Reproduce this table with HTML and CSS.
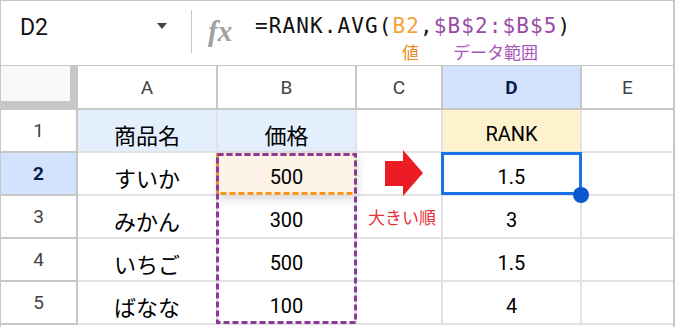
FILE: index.html
```
<!DOCTYPE html>
<html lang="ja">
<head>
<meta charset="utf-8">
<link rel="stylesheet" href="styles.css">
</head>
<body>
<div class="app">
  <div class="fbar">
    <div class="namebox"><span class="cellref">D2</span><span class="tri"></span></div>
    <div class="sep"></div>
    <div class="fxbox"><span class="fx">fx</span></div>
    <div class="formula">
      <div class="fline">=RANK.AVG(<span class="r1">B2</span>,<span class="r2">$B$2:$B$5</span>)</div>
      <div class="lline"><span class="l1">値</span><span class="l2">データ範囲</span></div>
    </div>
  </div>
  <div class="sheet">
    <div class="corner"><div class="corner-in"></div></div>
    <div class="c ch">A</div>
    <div class="c ch">B</div>
    <div class="c ch">C</div>
    <div class="c ch csel">D</div>
    <div class="c ch last">E</div>

    <div class="c rh">1</div>
    <div class="c jp blue">商品名</div>
    <div class="c jp blue">価格</div>
    <div class="c"></div>
    <div class="c yellow">RANK</div>
    <div class="c last"></div>

    <div class="c rh rsel">2</div>
    <div class="c jp">すいか</div>
    <div class="c b2">500</div>
    <div class="c"></div>
    <div class="c">1.5</div>
    <div class="c last"></div>

    <div class="c rh">3</div>
    <div class="c jp">みかん</div>
    <div class="c">300</div>
    <div class="c note">大きい順</div>
    <div class="c">3</div>
    <div class="c last"></div>

    <div class="c rh">4</div>
    <div class="c jp">いちご</div>
    <div class="c">500</div>
    <div class="c"></div>
    <div class="c">1.5</div>
    <div class="c last"></div>

    <div class="c rh">5</div>
    <div class="c jp">ばなな</div>
    <div class="c">100</div>
    <div class="c"></div>
    <div class="c">4</div>
    <div class="c last"></div>
  </div>

  <svg class="overlay" width="675" height="327" viewBox="0 0 675 327">
    <rect x="217.5" y="154.5" width="138" height="39" fill="none" stroke="#f7941d" stroke-width="3" stroke-dasharray="6 3"/>
    <rect x="217.5" y="154.5" width="138" height="168" fill="none" stroke="#8b3a99" stroke-width="3" stroke-dasharray="6 3"/>
    <polygon points="385,161 403,161 403,150 423,173 403,196 403,186 385,186" fill="#ed1c24"/>
  </svg>
  <div class="sel"></div>
  <div class="handle"></div>
</div>
</body>
</html>
```

FILE: styles.css
```
* { box-sizing: border-box; margin: 0; padding: 0; }
body { margin: 0; background: #fff; font-family: Roboto, "Noto Sans CJK JP", sans-serif; }

.app {
  position: relative;
  width: 675px;
  height: 327px;
  border: 1px solid #c7c7c7;
  border-right-width: 2px;
  border-bottom: none;
  overflow: hidden;
  background: #fff;
}

.fbar {
  height: 65px;
  border-bottom: 1px solid #c7c7c7;
  display: flex;
  align-items: flex-start;
}

.namebox {
  width: 190px;
  display: flex;
  justify-content: space-between;
  align-items: flex-start;
  padding: 14px 24px 0 19px;
}
.cellref { font-size: 23px; line-height: 26px; color: #111; }
.tri {
  margin-top: 8px;
  width: 0; height: 0;
  border-left: 5px solid transparent;
  border-right: 5px solid transparent;
  border-top: 6px solid #444;
}
.sep { width: 1px; height: 43px; margin-top: 9px; background: #c7c7c7; }

.fxbox { width: 63px; padding: 16px 0 0 16px; }
.fx {
  font-family: "Liberation Serif", serif;
  font-style: italic;
  font-weight: bold;
  font-size: 29px;
  line-height: 28px;
  color: #a0a0a0;
}

.formula { display: flex; flex-direction: column; padding-top: 13px; }
.fline {
  font-family: "DejaVu Sans Mono", monospace;
  font-size: 21px;
  line-height: 24px;
  letter-spacing: 1.1px;
  color: #111;
  white-space: nowrap;
}
.r1 { color: #f6a13a; }
.r2 { color: #9a4aa6; }
.lline {
  margin-top: 4px;
  font-family: "Noto Sans CJK JP", sans-serif;
  font-size: 17px;
  line-height: 20px;
  white-space: nowrap;
}
.l1 { margin-left: 147px; color: #ef8a2a; }
.l2 { margin-left: 34px; color: #a855b8; }

.sheet {
  display: grid;
  grid-template-columns: 77px 140px 139px 86px 139px 1fr;
  grid-template-rows: 44px repeat(5, 43px);
}

.corner { background: #c7c7c7; }
.corner-in { width: 69px; height: 35px; background: #f8f9fa; }

.c {
  border-right: 2px solid #e2e2e2;
  border-bottom: 2px solid #e2e2e2;
  display: flex;
  align-items: center;
  justify-content: center;
  padding-top: 7px;
  font-size: 20px;
  color: #000;
  background: #fff;
}
.c.last { border-right: none; }

.ch {
  border-color: #c7c7c7;
  padding-top: 0;
  font-size: 19px;
  color: #444;
}
.rh {
  border-right-color: #c7c7c7;
  border-bottom-color: #c7c7c7;
  padding-top: 0;
  font-size: 19px;
  color: #444;
}
.csel, .rsel { background: #d3e3fd; color: #041e49; font-weight: bold; }

.jp { font-family: "Noto Sans CJK JP", sans-serif; font-size: 22px; }
.blue { background: #e4effd; }
.yellow { background: #fef2cd; }
.b2 {
  position: relative;
  z-index: 1;
  background: #fdf2e7;
  box-shadow: 0 3px 9px rgba(0, 0, 0, 0.16);
}
.note {
  align-items: flex-start;
  justify-content: flex-start;
  padding: 11px 0 0 11px;
  font-family: "Noto Sans CJK JP", sans-serif;
  font-size: 17px;
  line-height: 20px;
  color: #e6303a;
}

.overlay { position: absolute; left: -1px; top: -1px; z-index: 2; }
.sel {
  position: absolute;
  left: 440px;
  top: 151px;
  width: 141px;
  height: 43px;
  border: 3px solid #1a73e8;
  z-index: 3;
}
.handle {
  position: absolute;
  left: 572px;
  top: 186px;
  width: 16px;
  height: 16px;
  border-radius: 50%;
  background: #0b57d0;
  z-index: 4;
}
```
